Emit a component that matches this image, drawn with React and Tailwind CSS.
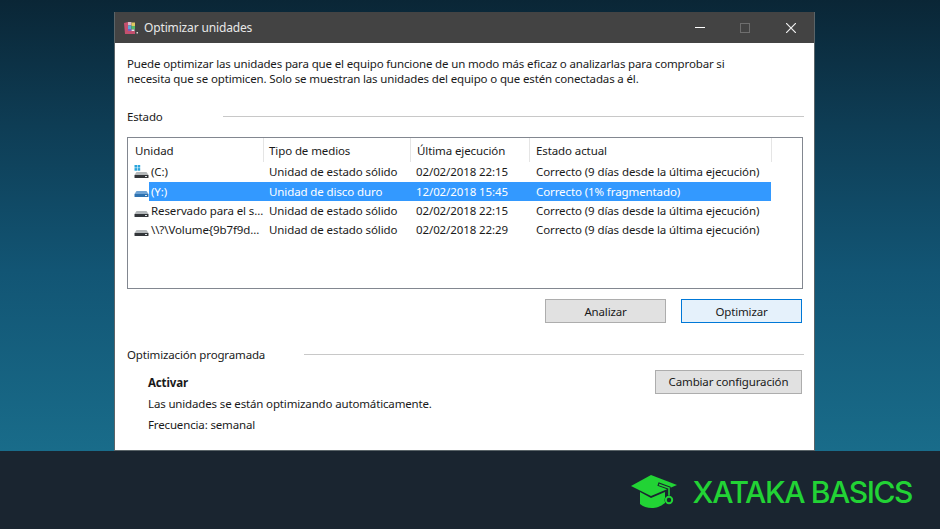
const columns = [
  { label: 'Unidad', w: 'w-[130px]', pad: 'pl-[1px]' },
  { label: 'Tipo de medios', w: 'w-[147px]', pad: 'pl-[5px]' },
  { label: 'Última ejecución', w: 'w-[119px]', pad: 'pl-[6px]' },
  { label: 'Estado actual', w: 'w-[242px]', pad: 'pl-[6px]' },
];

const rows = [
  { icon: 'system', name: '(C:)', type: 'Unidad de estado sólido', last: '02/02/2018 22:15', state: 'Correcto (9 días desde la última ejecución)' },
  { icon: 'hdd', name: '(Y:)', type: 'Unidad de disco duro', last: '12/02/2018 15:45', state: 'Correcto (1% fragmentado)', selected: true },
  { icon: 'ssd', name: 'Reservado para el s...', type: 'Unidad de estado sólido', last: '02/02/2018 22:15', state: 'Correcto (9 días desde la última ejecución)' },
  { icon: 'ssd', name: '\\\\?\\Volume{9b7f9d...', type: 'Unidad de estado sólido', last: '02/02/2018 22:29', state: 'Correcto (9 días desde la última ejecución)' },
];

function DriveIcon({ kind }) {
  const top = kind === 'hdd' ? '#6fa3d4' : '#b4b8ba';
  const body = kind === 'hdd' ? '#2f72b0' : '#33363a';
  return (
    <svg width="15" height="14" viewBox="0 0 15 14" className="shrink-0">
      {kind === 'system' && (
        <g fill="#2aa5dc">
          <rect x="0.5" y="0" width="2.6" height="2.6" />
          <rect x="3.6" y="0" width="2.6" height="2.6" />
          <rect x="0.5" y="3.1" width="2.6" height="2.6" />
          <rect x="3.6" y="3.1" width="2.6" height="2.6" />
        </g>
      )}
      <path d="M2.5 7 L12.5 7 L14.5 10 L0.5 10 Z" fill={top} />
      <path d="M0.5 10 L14.5 10 L14.5 12.5 Q14.5 13 14 13 L1 13 Q0.5 13 0.5 12.5 Z" fill={body} />
      <rect x="11" y="11" width="2" height="1" fill="#dfe4e8" />
    </svg>
  );
}

function AppIcon() {
  return (
    <svg width="16" height="16" viewBox="0 0 16 16" className="shrink-0">
      <path d="M1 3 L5 2 L5 11 L12 11 L12 14 L2 14 Z" fill="#c4506e" />
      <rect x="5" y="2" width="3.5" height="3.5" fill="#d8b8c8" />
      <rect x="8.5" y="2.5" width="3.5" height="3.5" fill="#e0c860" />
      <rect x="5" y="5.5" width="3.5" height="3.5" fill="#58a8d8" />
      <rect x="8.5" y="6" width="3.5" height="3.5" fill="#58b868" />
      <rect x="5" y="9" width="3.5" height="2" fill="#7a5cc0" />
      <rect x="8.5" y="9.5" width="3" height="1.5" fill="#e8e8f0" />
      <rect x="13.5" y="12" width="1.5" height="1.5" fill="#d8d8d8" />
    </svg>
  );
}

function SectionTitle({ text, titleWidth }) {
  return (
    <div className="flex items-center">
      <span className={titleWidth}>{text}</span>
      <div className="h-px flex-1 bg-[#c8c8c8]" />
    </div>
  );
}

function HatLogo() {
  return (
    <svg width="48" height="33" viewBox="0 0 48 33" className="shrink-0">
      <path d="M21 0 L47 10 L21 21 L1 11 Z" fill="#22d335" />
      <path d="M10 17 L21 23 L35 17 L35 28 C30 32 26 33 22 33 C17 33 13 31.5 10 29 Z" fill="#22d335" />
      <path d="M28 9 L39 13 L39 21" stroke="#1a2530" strokeWidth="3.5" fill="none" />
      <path d="M29 9.5 L39 13 L39 21" stroke="#22d335" strokeWidth="1.5" fill="none" />
      <circle cx="39" cy="25" r="4.5" fill="#1a2530" />
      <circle cx="39" cy="25" r="3.2" fill="none" stroke="#22d335" strokeWidth="2" />
    </svg>
  );
}

export default function App() {
  return (
    <div className="flex h-[529px] w-[940px] flex-col overflow-hidden font-['Noto_Sans',sans-serif] text-[11.5px] tracking-[-0.15px] text-[#1a1a1a]">
      <div className="flex-1 bg-[linear-gradient(180deg,#0a2636_0%,#0e3d55_28%,#125574_60%,#196c8a_100%)] pl-[114px] pt-[12px]">
        <div className="h-[439px] w-[701px] border border-t-0 border-[#5a6468] bg-white">
          <div className="flex h-[31px] items-center bg-[#434343] pl-[8px] text-[12px] text-[#e8e8e8]">
            <AppIcon />
            <span className="ml-[5px]">Optimizar unidades</span>
            <div className="ml-auto flex items-center">
              <div className="mr-[35px] h-px w-[10px] bg-white" />
              <div className="mr-[36px] h-[10px] w-[10px] border border-[#6e6e6e]" />
              <svg width="10" height="10" viewBox="0 0 10 10" className="mr-[18px]">
                <path d="M0 0 L10 10 M10 0 L0 10" stroke="#f0f0f0" strokeWidth="1.2" />
              </svg>
            </div>
          </div>

          <div className="pl-[12px] pr-[10px] pt-[13px]">
            <p className="leading-[15px]">
              Puede optimizar las unidades para que el equipo funcione de un modo más eficaz o analizarlas para comprobar si<br />
              necesita que se optimicen. Solo se muestran las unidades del equipo o que estén conectadas a él.
            </p>

            <div className="mt-[22px]">
              <SectionTitle text="Estado" titleWidth="w-[96px]" />
            </div>

            <div className="mt-[12px] h-[152px] w-[676px] border border-[#828790] pl-[2px] tracking-[-0.1px]">
              <div className="flex h-[24px] pl-[4px]">
                {columns.map((c) => (
                  <div key={c.label} className={`${c.w} ${c.pad} flex items-center border-r border-[#e5e5e5]`}>
                    {c.label}
                  </div>
                ))}
              </div>
              <div>
                {rows.map((r) => (
                  <div key={r.last + r.name} className="flex h-[19.4px] items-center pl-[4px]">
                    <div className="w-[15px]">
                      <DriveIcon kind={r.icon} />
                    </div>
                    <div className={`flex h-full w-[622px] items-center ${r.selected ? 'bg-[#3399ff] text-white' : ''}`}>
                      <span className="w-[120px] shrink-0 pl-[2px] whitespace-nowrap">{r.name}</span>
                      <span className="w-[147px] shrink-0 whitespace-nowrap">{r.type}</span>
                      <span className="w-[120px] shrink-0 whitespace-nowrap">{r.last}</span>
                      <span className="whitespace-nowrap">{r.state}</span>
                    </div>
                  </div>
                ))}
              </div>
            </div>

            <div className="mt-[10px] flex justify-end gap-[15px] pr-[2px]">
              <button className="h-[24px] w-[121px] border border-[#adadad] bg-[#e1e1e1]">Analizar</button>
              <button className="h-[24px] w-[121px] border border-[#0078d7] bg-[#e5f1fb]">Optimizar</button>
            </div>

            <div className="mt-[23px]">
              <SectionTitle text="Optimización programada" titleWidth="w-[177px]" />
            </div>

            <div className="mt-[6px] flex justify-between pl-[21px] pr-[2px]">
              <div>
                <div className="pt-[5px] font-bold leading-[15px]">Activar</div>
                <div className="mt-[6px] leading-[15px]">Las unidades se están optimizando automáticamente.</div>
                <div className="mt-[6px] leading-[15px]">Frecuencia: semanal</div>
              </div>
              <button className="h-[24px] w-[147px] border border-[#adadad] bg-[#e1e1e1]">Cambiar configuración</button>
            </div>
          </div>
        </div>
      </div>

      <div className="flex h-[78px] items-center justify-end bg-[#1a2530] pr-[28px] pt-[3px]">
        <HatLogo />
        <span className="ml-[15px] font-['Inter',sans-serif] text-[30px] leading-none font-medium tracking-[-1.4px] text-[#22d335]">XATAKA BASICS</span>
      </div>
    </div>
  );
}
